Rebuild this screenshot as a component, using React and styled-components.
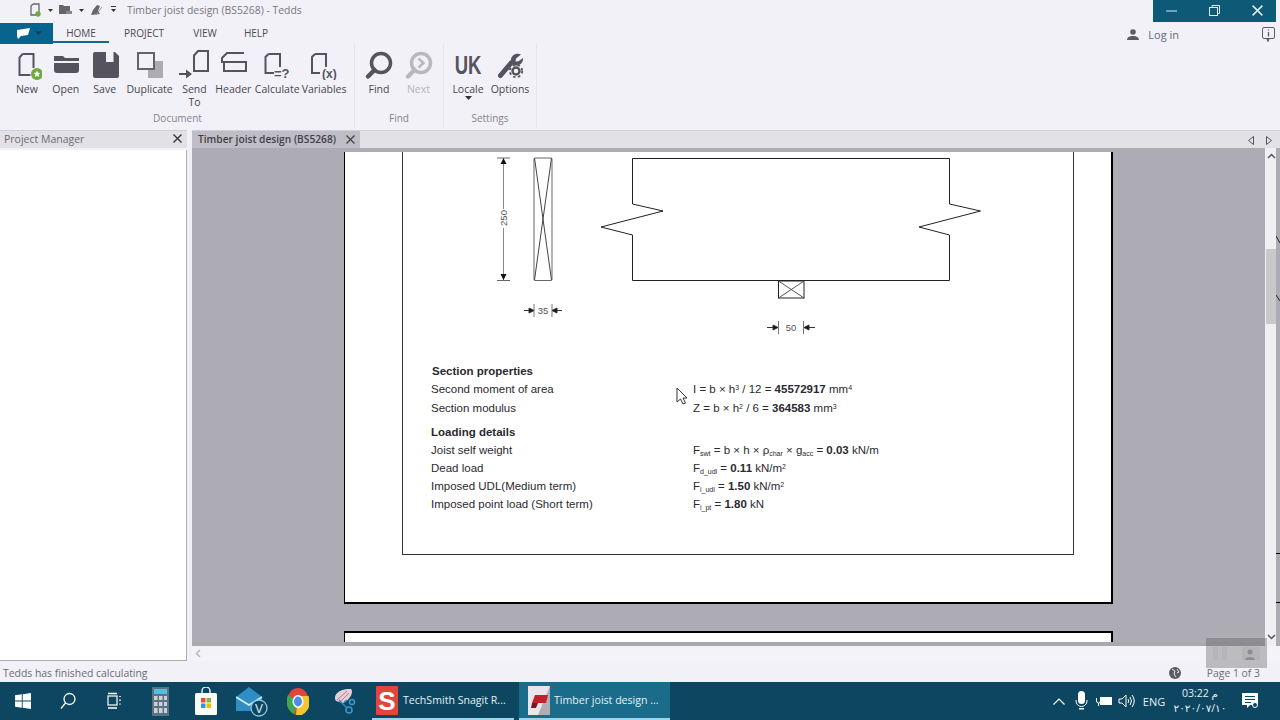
import React from 'react';
import styled, { createGlobalStyle } from 'styled-components';

const GlobalStyle = createGlobalStyle`
  html, body { margin: 0; padding: 0; width: 1280px; height: 720px; overflow: hidden; }
  body { font-family: "Open Sans", "Liberation Sans", sans-serif; background: #f2f1f8; }
`;

const ICON = '#55535e';
const BG = '#f2f1f8';

const Window = styled.div`
  width: 1280px;
  height: 720px;
  display: flex;
  flex-direction: column;
  background: ${BG};
  overflow: hidden;
`;

const TitleBar = styled.div`
  height: 22px;
  display: flex;
  align-items: flex-start;
  padding-left: 28px;
  flex: none;
`;

const QuickIcons = styled.div`
  display: flex;
  align-items: center;
  height: 20px;
  width: 99px;
`;

const TitleText = styled.div`
  font-size: 10.4px;
  line-height: 20px;
  color: #77767e;
`;

const WindowControls = styled.div`
  margin-left: auto;
  margin-right: 4px;
  width: 123px;
  height: 22px;
  background: #0c5a76;
  display: flex;
  align-items: center;
  justify-content: space-between;
  padding: 0 13px 1px 13px;
  box-sizing: border-box;
`;

const MenuRow = styled.div`
  height: 22px;
  display: flex;
  align-items: center;
  position: relative;
  flex: none;
`;

const FileButton = styled.div`
  width: 53px;
  height: 21px;
  background: #07648f;
  display: flex;
  align-items: center;
  gap: 5px;
  padding-left: 14px;
  box-sizing: border-box;
`;

const MenuTab = styled.div`
  width: ${p => p.$w}px;
  height: 20px;
  line-height: 20px;
  text-align: center;
  font-size: 10px;
  color: #4b4a52;
  box-sizing: border-box;
  border-bottom: ${p => (p.$active ? '2px solid #0f6a92' : 'none')};
`;

const LoginArea = styled.div`
  margin-left: auto;
  padding-top: 2px;
  display: flex;
  align-items: center;
  font-size: 11px;
  color: #5f6a74;
`;

const LoginText = styled.span`
  margin-left: 9px;
  margin-right: 101px;
`;

const InfoWrap = styled.div`
  position: absolute;
  right: 5px;
  top: 3px;
`;

const Ribbon = styled.div`
  height: 86px;
  display: flex;
  flex: none;
`;

const Group = styled.div`
  display: flex;
  flex-direction: column;
  padding: 6px ${p => p.$pr}px 0 ${p => p.$pl}px;
  border-right: 1px solid #e6e5ec;
  box-sizing: border-box;
  width: ${p => p.$w}px;
  height: 84px;
`;

const GroupButtons = styled.div`
  display: flex;
  height: 62px;
`;

const GroupLabel = styled.div`
  font-size: 10px;
  line-height: 12px;
  text-align: center;
  color: #85848c;
`;

const RibbonBtn = styled.div`
  width: ${p => p.$w}px;
  display: flex;
  flex-direction: column;
  align-items: center;
  font-size: 10.5px;
  line-height: 13px;
  color: ${p => (p.$off ? '#b5b4ba' : '#47464e')};
  text-align: center;
  svg { display: block; margin-bottom: 3px; flex: none; }
`;

const UkMark = styled.div`
  width: 40px;
  height: 30px;
  margin-bottom: 3px;
  text-align: center;
  font-family: "Liberation Sans", Arial, sans-serif;
  font-size: 25px;
  line-height: 30px;
  font-weight: 700;
  color: ${ICON};
  transform: scaleX(0.74);
`;

const Main = styled.div`
  height: 531px;
  display: flex;
  flex: none;
`;

const Sidebar = styled.div`
  width: 192px;
  display: flex;
  flex-direction: column;
`;

const PanelHeader = styled.div`
  width: 187px;
  height: 18px;
  background: #e1e1e6;
  border-top: 1px solid #d0d0d6;
  box-sizing: border-box;
  display: flex;
  align-items: center;
  justify-content: space-between;
  padding: 0 5px 2px 4px;
  font-size: 10.5px;
  color: #6c6b73;
`;

const PanelBody = styled.div`
  width: 187px;
  margin-top: 2px;
  flex: 1;
  background: #fff;
  border: 1px solid #aeadb4;
  border-top: none;
  border-left: none;
  box-sizing: border-box;
`;

const DocColumn = styled.div`
  flex: 1;
  display: flex;
  flex-direction: column;
  min-width: 0;
`;

const TabStrip = styled.div`
  height: 18px;
  background: #e1e1e6;
  border-top: 1px solid #d0d0d6;
  box-sizing: border-box;
  display: flex;
  align-items: flex-end;
  justify-content: space-between;
`;

const DocTab = styled.div`
  width: 168px;
  height: 17px;
  background: #bfbec7;
  display: flex;
  align-items: center;
  justify-content: space-between;
  padding: 0 5px 1px 6px;
  box-sizing: border-box;
  font-size: 10.2px;
  font-weight: 600;
  color: #3f3e46;
  white-space: nowrap;
`;

const TabArrows = styled.div`
  display: flex;
  gap: 12px;
  padding: 0 8px 3px 0;
  align-items: center;
`;

const ViewerRow = styled.div`
  height: 498px;
  display: flex;
  position: relative;
`;

const Viewer = styled.div`
  width: 1073px;
  height: 498px;
  background: #adabb3;
  border-bottom: 4px solid #a9a9ae;
  box-sizing: border-box;
  padding: 4px 0 0 152px;
  overflow: hidden;
`;

const Paper = styled.div`
  width: 769px;
  height: 452px;
  box-sizing: border-box;
  background: #fff;
  border: 2px solid #000;
  border-top: none;
  border-left-width: 1px;
  padding-left: 57px;
  padding-right: 37px;
`;

const NextPaper = styled.div`
  width: 769px;
  height: 40px;
  margin-top: 27px;
  box-sizing: border-box;
  background: #fff;
  border: 2px solid #000;
  border-left-width: 1px;
  border-bottom: none;
`;

const Frame = styled.div`
  height: 403px;
  box-sizing: border-box;
  border: 1px solid #333;
  border-top: none;
  padding-left: 28px;
  position: relative;
`;

const Diagram = styled.svg`
  display: block;
  margin-left: -28px;
`;

const CalcRow = styled.div`
  display: grid;
  grid-template-columns: 262px 1fr;
  height: ${p => p.$h}px;
  margin-top: ${p => p.$mt || 0}px;
  line-height: ${p => p.$h}px;
  font-family: "Liberation Sans", Arial, sans-serif;
  font-size: 11.5px;
  color: #2a2a2e;
  white-space: nowrap;
`;

const Sub = styled.span`
  font-size: 7px;
  position: relative;
  top: 2px;
`;

const Sup = styled.span`
  font-size: 7px;
  position: relative;
  top: -3px;
`;

const Heading = styled.b`
  padding-left: 1px;
`;

const Cursor = styled.svg`
  position: absolute;
  left: 273px;
  top: 235px;
`;

const ScrollTrack = styled.div`
  width: 10px;
  margin-left: 1px;
  background: #f0f0f4;
  display: flex;
  flex-direction: column;
  align-items: center;
  justify-content: space-between;
  padding: 5px 0 6px;
  box-sizing: border-box;
  position: relative;
`;

const ScrollThumb = styled.div`
  position: absolute;
  left: 0;
  right: 0;
  top: 101px;
  height: 75px;
  background: #c9c9cc;
`;

const EdgeSliver = styled.div`
  width: 4px;
  background: #adabb3;
`;

const HScroll = styled.div`
  flex: 1;
  display: flex;
  align-items: center;
  padding-left: 3px;
  background: #f4f3f8;
`;

const StatusBar = styled.div`
  height: 21px;
  flex: none;
  display: flex;
  align-items: center;
  padding: 3px 20px 0 3px;
  box-sizing: border-box;
  font-size: 10.4px;
  color: #6c6b73;
  justify-content: space-between;
`;

const StatusRight = styled.div`
  display: flex;
  align-items: center;
  gap: 26px;
`;

const RecorderBar = styled.div`
  position: absolute;
  left: 1014px;
  top: 490px;
  width: 61px;
  height: 30px;
  background: rgba(88, 88, 88, 0.36);
  display: flex;
  align-items: center;
  justify-content: space-around;
  box-sizing: border-box;
`;

const Taskbar = styled.div`
  height: 38px;
  flex: none;
  background: #0c4660;
  display: flex;
  align-items: stretch;
  color: #e8f0f4;
`;

const Slot = styled.div`
  width: ${p => p.$w || 46}px;
  display: flex;
  align-items: center;
  justify-content: center;
  flex: none;
`;

const TaskApp = styled.div`
  width: ${p => p.$w}px;
  margin-left: 5px;
  box-sizing: border-box;
  display: flex;
  align-items: center;
  gap: ${p => p.$gap}px;
  padding-left: ${p => p.$pl}px;
  font-size: 10.6px;
  white-space: nowrap;
  background: ${p => (p.$active ? '#1b6b8b' : 'transparent')};
  border-bottom: 2px solid #9fd3ea;
`;

const Tray = styled.div`
  margin-left: auto;
  display: flex;
  align-items: stretch;
  padding-right: 10px;
  font-size: 11px;
`;

const Clock = styled.div`
  width: 60px;
  flex: none;
  display: flex;
  flex-direction: column;
  align-items: center;
  justify-content: center;
  font-size: 10.5px;
  line-height: 15px;
  font-family: "Open Sans", "DejaVu Sans", sans-serif;
  direction: ltr;
`;

const Stroke = { fill: 'none', stroke: ICON, strokeWidth: 2 };

const NewIcon = () => (
  <svg width="30" height="30">
    <path d="M10.5 4h11v14M10.5 4L7.5 7.5V25h11" {...Stroke} />
    <circle cx="25" cy="24" r="6" fill="#6faa3e" />
    <path d="M25 20.5l1 2.3 2.4.2-1.8 1.6.6 2.4-2.2-1.3-2.2 1.3.6-2.4-1.8-1.6 2.4-.2z" fill="#fff" />
  </svg>
);

const OpenIcon = () => (
  <svg width="30" height="30">
    <path d="M3 6h9l2 2h14v3H3z" fill={ICON} />
    <path d="M3 13h25v7a3 3 0 0 1-3 3H6a3 3 0 0 1-3-3z" fill={ICON} />
  </svg>
);

const SaveIcon = () => (
  <svg width="30" height="30">
    <path d="M5 2h20l4 4v20a2 2 0 0 1-2 2H5a2 2 0 0 1-2-2V4a2 2 0 0 1 2-2z" fill={ICON} />
    <rect x="16" y="2" width="7.5" height="10" fill={BG} />
  </svg>
);

const DuplicateIcon = () => (
  <svg width="30" height="30">
    <rect x="13" y="11" width="15" height="17" fill="#adacb2" />
    <rect x="3" y="3" width="16" height="16" fill={BG} stroke="#64636b" strokeWidth="2" />
  </svg>
);

const SendToIcon = () => (
  <svg width="30" height="30">
    <path d="M19 1h10v20H15V5.5z" {...Stroke} />
    <path d="M0 23h7v-3.5l6 4.500-6 4.500V25H0z" fill={ICON} />
  </svg>
);

const HeaderIcon = () => (
  <svg width="30" height="30">
    <path d="M26 3H9L4 8v5" {...Stroke} />
    <rect x="6" y="12" width="22" height="9" {...Stroke} />
  </svg>
);

const CalculateIcon = () => (
  <svg width="30" height="30">
    <path d="M6.500 4H18v13M6.500 4L3.500 7v16H12" {...Stroke} />
    <text x="12" y="28" fontFamily="Liberation Sans" fontWeight="700" fontSize="13" fill={ICON}>=?</text>
  </svg>
);

const VariablesIcon = () => (
  <svg width="30" height="30">
    <path d="M6 4h11v13M6 4L3 7v16h8" {...Stroke} />
    <text x="13" y="28" fontFamily="Liberation Sans" fontWeight="700" fontSize="12" fill={ICON}>(x)</text>
  </svg>
);

const FindIcon = ({ off }) => {
  const c = off ? '#b9b8bd' : ICON;
  return (
    <svg width="30" height="30">
      <circle cx="17" cy="13" r="9.500" fill="none" stroke={c} strokeWidth="3.500" />
      <path d="M10.500 20L4 26.500" stroke={c} strokeWidth="4.500" strokeLinecap="round" />
      {off && <path d="M14.500 8.500l5 4.500-5 4.500" fill="none" stroke={c} strokeWidth="2.500" />}
    </svg>
  );
};

const OptionsIcon = () => (
  <svg width="30" height="30">
    <path d="M5.500 25.500L16 13" stroke={ICON} strokeWidth="5" strokeLinecap="round" />
    <path d="M26 4.500l-5 4 -.5 3 3-.2 4.500-3.300c.5 3-1.500 7-6 7.500-3 .2-6-2-6-5.500 0-4.500 5-7.500 10-5.500z" fill={ICON} />
    <circle cx="21" cy="21" r="3.500" fill={BG} stroke={ICON} strokeWidth="2.500" />
    <circle cx="21" cy="21" r="6.200" fill="none" stroke={ICON} strokeWidth="1.800" strokeDasharray="2.500 2.500" />
  </svg>
);

const Caret = ({ c = '#333' }) => (
  <svg width="7" height="4"><path d="M0 0h7L3.500 4z" fill={c} /></svg>
);

const CloseX = ({ c = '#333', s = 9 }) => (
  <svg width={s} height={s} viewBox="0 0 9 9"><path d="M.5.500l8 8M8.500.500l-8 8" stroke={c} strokeWidth="1.300" /></svg>
);

const Chevron = ({ d = 'M1 5l3.500-3.500L8 5' }) => (
  <svg width="9" height="6"><path d={d} fill="none" stroke="#55545c" strokeWidth="1.500" /></svg>
);

function Dim35() {
  return (
    <g stroke="#333" strokeWidth="1" fill="none">
      <path d="M524 310.500h10M562 310.500h-10" />
      <path d="M534 304v13M552 304v13" stroke="#777" />
      <path d="M529 308l5 2.500-5 2.500zM557 308l-5 2.500 5 2.500z" fill="#111" />
    </g>
  );
}

function Dim50() {
  return (
    <g stroke="#333" strokeWidth="1" fill="none">
      <path d="M767 327.500h11M815 327.500h-11" />
      <path d="M778.500 321v13M803.500 321v13" stroke="#777" />
      <path d="M773 325l5 2.500-5 2.500zM809 325l-5 2.500 5 2.500z" fill="#111" />
    </g>
  );
}

const Sketch = () => (
  <Diagram width="670" height="210" viewBox="403 152 670 210">
    <g fill="none" stroke="#222" strokeWidth="1">
      <path d="M497 158h13M497 280.500h13" stroke="#666" />
      <path d="M503.500 158v122" stroke="#888" />
      <rect x="534" y="158" width="18" height="122.500" rx="1" stroke="#666" />
      <path d="M534.500 158L551.500 280M551.500 158L534.500 280" stroke="#444" />
      <path d="M632.500 204V158.500H949.500V204L980.500 211L919 227L949.500 235V280.500H632.500V235L601 227L663 211z" />
      <rect x="778.500" y="281" width="25.500" height="17" />
      <path d="M778.500 281L804 298M804 281L778.500 298" stroke="#555" />
    </g>
    <path d="M503.500 158l-3 6h6zM503.500 280l-3-6h6z" fill="#111" />
    <rect x="498" y="209" width="11" height="19" fill="#fff" />
    <text x="503" y="221.500" transform="rotate(-90 503 218)" textAnchor="middle" fontFamily="Liberation Sans" fontSize="9.500" fill="#555">250</text>
    <Dim35 />
    <text x="543" y="313.500" textAnchor="middle" fontFamily="Liberation Sans" fontSize="9.500" fill="#555">35</text>
    <Dim50 />
    <text x="791" y="330.500" textAnchor="middle" fontFamily="Liberation Sans" fontSize="9.500" fill="#555">50</text>
  </Diagram>
);

const rows = [
  { h: 19, label: <Heading>Section properties</Heading> },
  { h: 17, label: 'Second moment of area', value: <>I = b × h<Sup>3</Sup> / 12 = <b>45572917</b> mm<Sup>4</Sup></> },
  { h: 21, label: 'Section modulus', value: <>Z = b × h<Sup>2</Sup> / 6 = <b>364583</b> mm<Sup>3</Sup></> },
  { h: 20, mt: 3, label: <b>Loading details</b> },
  { h: 16, label: 'Joist self weight', value: <>F<Sub>swt</Sub> = b × h × ρ<Sub>char</Sub> × g<Sub>acc</Sub> = <b>0.03</b> kN/m</> },
  { h: 21, label: 'Dead load', value: <>F<Sub>d_udl</Sub> = <b>0.11</b> kN/m<Sup>2</Sup></> },
  { h: 14, label: 'Imposed UDL(Medium term)', value: <>F<Sub>i_udl</Sub> = <b>1.50</b> kN/m<Sup>2</Sup></> },
  { h: 22, label: 'Imposed point load (Short term)', value: <>F<Sub>i_pt</Sub> = <b>1.80</b> kN</> },
];

const ribbonButtons = [
  { w: 38, label: 'New', icon: <NewIcon /> },
  { w: 40, label: 'Open', icon: <OpenIcon /> },
  { w: 38, label: 'Save', icon: <SaveIcon /> },
  { w: 52, label: 'Duplicate', icon: <DuplicateIcon /> },
  { w: 38, label: <>Send<br />To</>, icon: <SendToIcon /> },
  { w: 40, label: 'Header', icon: <HeaderIcon /> },
  { w: 48, label: 'Calculate', icon: <CalculateIcon /> },
  { w: 46, label: 'Variables', icon: <VariablesIcon /> },
];

const WinLogo = () => (
  <svg width="16" height="16" viewBox="0 0 16 16" fill="#fff">
    <path d="M0 2.300l6.800-1v6.300H0zM7.700 1.200L16 0v7.600H7.700zM0 8.400h6.800v6.300L0 13.700zM7.700 8.400H16V16l-8.300-1.200z" />
  </svg>
);

const SearchGlyph = () => (
  <svg width="16" height="18" fill="none" stroke="#fff" strokeWidth="1.300">
    <circle cx="9.500" cy="7" r="5.500" />
    <path d="M5.500 11L1 16.500" />
  </svg>
);

const TaskViewGlyph = () => (
  <svg width="15" height="18" fill="none" stroke="#fff" strokeWidth="1.200">
    <rect x="1" y="4" width="9" height="9" />
    <path d="M1 1.500h9M1 16h9M13 4v1M13 7.500v1.500M13 11.500v1" strokeWidth="1.500" />
  </svg>
);

const CalcGlyph = () => (
  <svg width="17" height="29" viewBox="0 0 17 29">
    <rect width="17" height="29" fill="#5c7282" />
    <rect x="2" y="2" width="13" height="5" fill="#50c0de" />
    <path d="M2 9h3.500v4H2zM7 9h3.500v4H7zM12 9h3v4h-3zM2 15h3.500v4H2zM7 15h3.500v4H7zM12 15h3v4h-3zM2 21h3.500v5H2zM7 21h3.500v5H7zM12 21h3v5h-3z" fill="#c8d2d8" />
  </svg>
);

const StoreGlyph = () => (
  <svg width="22" height="28" viewBox="0 0 22 28">
    <path d="M7 6V4a4 4 0 0 1 8 0v2" fill="none" stroke="#e8eef0" strokeWidth="1.500" />
    <rect y="6" width="22" height="22" rx="1.500" fill="#fbfbfb" />
    <rect x="6" y="11" width="4.500" height="4.500" fill="#e8502a" />
    <rect x="11.500" y="11" width="4.500" height="4.500" fill="#7db93a" />
    <rect x="6" y="16.500" width="4.500" height="4.500" fill="#1ea0e0" />
    <rect x="11.500" y="16.500" width="4.500" height="4.500" fill="#f7b900" />
  </svg>
);

const MailGlyph = () => (
  <svg width="32" height="32" viewBox="0 0 32 32">
    <path d="M0 12L13 2l13 10v14H0z" fill="#2f8fc4" />
    <path d="M0 12l13 8 13-8" fill="none" stroke="#d8eef8" strokeWidth="1.500" />
    <circle cx="23" cy="23" r="8" fill="#0c4660" stroke="#8fc8e4" strokeWidth="1.300" />
    <text x="23" y="27.500" textAnchor="middle" fontFamily="Liberation Sans" fontSize="12" fill="#dcecf4">V</text>
  </svg>
);

const ChromeGlyph = () => (
  <svg width="22" height="27" viewBox="0 0 22 27">
    <ellipse cx="11" cy="13.500" rx="11" ry="13.500" fill="#e0463a" />
    <path d="M11 13.500L1 7A11 13.500 0 0 0 7 26z" fill="#3da84e" />
    <path d="M11 8h10.500A11 13.500 0 0 1 9 27z" fill="#f6c52e" />
    <ellipse cx="11" cy="13.500" rx="5.500" ry="6.500" fill="#fff" />
    <ellipse cx="11" cy="13.500" rx="4" ry="5" fill="#4a8ee8" />
  </svg>
);

const SnipGlyph = () => (
  <svg width="24" height="26" viewBox="0 0 24 26">
    <path d="M4 13C0 7 8 0 19 1c3 3-1 11-8 14z" fill="#e6cfd6" />
    <path d="M5 12L15 3M9 13L17 5" stroke="#b08090" />
    <path d="M7 12l8 8" stroke="#2f8fc4" strokeWidth="1.500" />
    <path d="M12 14l3-2" stroke="#2f8fc4" strokeWidth="1.500" />
    <circle cx="17" cy="22" r="3" fill="none" stroke="#3a9ad0" strokeWidth="1.500" />
    <circle cx="20" cy="14" r="2.500" fill="none" stroke="#3a9ad0" strokeWidth="1.500" />
  </svg>
);

const SnagitGlyph = () => (
  <svg width="22" height="29" viewBox="0 0 22 29">
    <rect width="22" height="29" rx="1" fill="#e2453c" />
    <text x="11" y="24" textAnchor="middle" fontFamily="Liberation Sans" fontWeight="700" fontSize="26" fill="#fff">S</text>
  </svg>
);

const TeddsGlyph = () => (
  <svg width="22" height="29" viewBox="0 0 22 29">
    <rect width="22" height="29" fill="#e8e6ea" />
    <path d="M22 0v29H10z" fill="#b0aeb4" />
    <path d="M7 9h13l-2 8H4z" fill="#c4202c" />
    <path d="M4 17h6l-2 5H3z" fill="#7a1820" />
  </svg>
);

const MicGlyph = () => (
  <svg width="13" height="20" fill="#fff">
    <rect x="3" y="0" width="7" height="13" rx="3.500" />
    <path d="M1 9v1a5.500 5.500 0 0 0 11 0V9" fill="none" stroke="#fff" />
    <path d="M4 17h5v1.500H4z" />
  </svg>
);

const BatteryGlyph = () => (
  <svg width="16" height="12" fill="none" stroke="#fff">
    <rect x="4.500" y="2.500" width="11" height="7" fill="#fff" />
    <path d="M.5 3v3a2 2 0 0 0 4 0V3M2.500 8v3" />
  </svg>
);

const VolumeGlyph = () => (
  <svg width="18" height="14" fill="none" stroke="#fff">
    <path d="M1 5h3l4-4v12L4 9H1z" />
    <path d="M10 5q1.500 2 0 4M12 3q3 4 0 8M14 1q4.500 6 0 12" />
  </svg>
);

const NotifyGlyph = () => (
  <svg width="17" height="16" viewBox="0 0 17 16">
    <path d="M0 0h16v12H8l-3 3v-3H0z" fill="#fff" />
    <path d="M3 3.500h10M3 6.500h10M3 9.500h6" stroke="#0c4660" />
    <circle cx="13" cy="12" r="2.500" fill="#0c4660" stroke="#fff" />
  </svg>
);

export default function App() {
  return (
    <Window>
      <GlobalStyle />
      <TitleBar>
        <QuickIcons>
          <svg width="90" height="14" viewBox="0 0 90 14">
            <path d="M5 1h6v8M5 1L3 3v9h5" fill="none" stroke="#666" strokeWidth="1.300" />
            <circle cx="10" cy="11" r="2.700" fill="#6faa3e" />
            <path d="M20 6h5L22.500 9z" fill="#333" />
            <path d="M31 2h4l1 1h6v8H31z" fill="#666" />
            <path d="M38 8h6v3h-6z" fill="#888" />
            <path d="M51 6h5l-2.500 3z" fill="#333" />
            <path d="M63 12l2-5 4-5 3 1-2 5 2 3z" fill="#666" />
            <path d="M68 12l6-8" stroke="#999" />
            <path d="M83 3h5v1h-5zM83 6h5l-2.500 3z" fill="#333" />
          </svg>
        </QuickIcons>
        <TitleText>Timber joist design (BS5268) - Tedds</TitleText>
        <WindowControls>
          <svg width="11" height="2"><path d="M0 1h11" stroke="#dfe9ee" /></svg>
          <svg width="11" height="11" fill="none" stroke="#dfe9ee"><path d="M3 2.500V.5h7.500v8H8.500" /><rect x=".5" y="2.500" width="8" height="8" /></svg>
          <CloseX c="#dfe9ee" s={11} />
        </WindowControls>
      </TitleBar>

      <MenuRow>
        <FileButton>
          <svg width="16" height="11"><path d="M3 2L16 0l-2 7-7 1-3 3-1-3z" fill="#fff" /></svg>
          <Caret c="#0a3e5a" />
        </FileButton>
        <MenuTab $w={56} $active>HOME</MenuTab>
        <MenuTab $w={70}>PROJECT</MenuTab>
        <MenuTab $w={52}>VIEW</MenuTab>
        <MenuTab $w={50}>HELP</MenuTab>
        <LoginArea>
          <svg width="12" height="11" fill="#5c5b64"><circle cx="6" cy="3" r="2.800" /><path d="M0 11c0-3 3-3.500 4-4h4c1 .5 4 1 4 4z" /></svg>
          <LoginText>Log in</LoginText>
        </LoginArea>
        <InfoWrap>
          <svg width="13" height="15" fill="none" stroke="#5c5b64">
            <rect x=".5" y=".5" width="12" height="11" rx="1.500" />
            <path d="M6.500 2.500v1M6.500 5v4.500M5 12l1 2 1-2" strokeWidth="1.300" />
          </svg>
        </InfoWrap>
      </MenuRow>

      <Ribbon>
        <Group $w={355} $pl={8} $pr={7}>
          <GroupButtons>
            {ribbonButtons.map((b, i) => (
              <RibbonBtn key={i} $w={b.w}>{b.icon}<span>{b.label}</span></RibbonBtn>
            ))}
          </GroupButtons>
          <GroupLabel>Document</GroupLabel>
        </Group>
        <Group $w={89} $pl={4} $pr={4}>
          <GroupButtons>
            <RibbonBtn $w={40}><FindIcon /><span>Find</span></RibbonBtn>
            <RibbonBtn $w={39} $off><FindIcon off /><span>Next</span></RibbonBtn>
          </GroupButtons>
          <GroupLabel>Find</GroupLabel>
        </Group>
        <Group $w={93} $pl={4} $pr={4}>
          <GroupButtons>
            <RibbonBtn $w={40}><UkMark>UK</UkMark><span>Locale</span><Caret /></RibbonBtn>
            <RibbonBtn $w={44}><OptionsIcon /><span>Options</span></RibbonBtn>
          </GroupButtons>
          <GroupLabel>Settings</GroupLabel>
        </Group>
      </Ribbon>

      <Main>
        <Sidebar>
          <PanelHeader>Project Manager <CloseX /></PanelHeader>
          <PanelBody />
        </Sidebar>
        <DocColumn>
          <TabStrip>
            <DocTab>Timber joist design (BS5268) <CloseX c="#444" /></DocTab>
            <TabArrows>
              <svg width="6" height="9"><path d="M5.500.5v8L.5 4.500z" fill="none" stroke="#55545c" /></svg>
              <svg width="6" height="9"><path d="M.5.5v8l5-4z" fill="none" stroke="#55545c" /></svg>
            </TabArrows>
          </TabStrip>
          <ViewerRow>
            <Viewer>
              <Paper>
                <Frame>
                  <Sketch />
                  {rows.map((r, i) => (
                    <CalcRow key={i} $h={r.h} $mt={r.mt}>
                      <div>{r.label}</div>
                      <div>{r.value}</div>
                    </CalcRow>
                  ))}
                  <Cursor width="13" height="18" viewBox="0 0 13 18">
                    <path d="M1 1v14l3.500-3 2.500 5 2.500-1-2.500-5H11z" fill="#fff" stroke="#333" />
                  </Cursor>
                </Frame>
              </Paper>
              <NextPaper />
            </Viewer>
            <ScrollTrack>
              <Chevron />
              <ScrollThumb />
              <Chevron d="M1 1l3.500 3.500L8 1" />
            </ScrollTrack>
            <EdgeSliver>
              <svg width="4" height="498">
                <path d="M0 88l4 7M0 147l4 6" stroke="#222" />
                <path d="M0 405.500h4M0 454.500h4" stroke="#000" />
              </svg>
            </EdgeSliver>
            <RecorderBar>
              <svg width="14" height="13" fill="#b5b4b8"><rect x="0" width="5" height="13" /><rect x="9" width="5" height="13" /></svg>
              <svg width="18" height="13" fill="#b5b4b8"><rect width="18" height="13" /><circle cx="8" cy="5" r="2.500" fill="#8e8d92" /><path d="M3 13c0-4 10-4 10 0z" fill="#8e8d92" /></svg>
            </RecorderBar>
          </ViewerRow>
          <HScroll>
            <svg width="6" height="9"><path d="M5 1L1.500 4.500 5 8" fill="none" stroke="#b8b7bd" strokeWidth="1.500" /></svg>
          </HScroll>
        </DocColumn>
      </Main>

      <StatusBar>
        <span>Tedds has finished calculating</span>
        <StatusRight>
          <svg width="12" height="12"><circle cx="6" cy="6" r="6" fill="#5c5b64" /><path d="M3 2l3 2-1 3 2 3M8 2l2 3-2 1" stroke="#e8e8ec" fill="none" /></svg>
          <span>Page 1 of 3</span>
        </StatusRight>
      </StatusBar>

      <Taskbar>
        <Slot $w={45}><WinLogo /></Slot>
        <Slot><SearchGlyph /></Slot>
        <Slot><TaskViewGlyph /></Slot>
        <Slot><CalcGlyph /></Slot>
        <Slot><StoreGlyph /></Slot>
        <Slot><MailGlyph /></Slot>
        <Slot><ChromeGlyph /></Slot>
        <Slot><SnipGlyph /></Slot>
        <TaskApp $w={142} $pl={4} $gap={5}><SnagitGlyph />TechSmith Snagit R...</TaskApp>
        <TaskApp $w={151} $pl={9} $gap={4} $active><TeddsGlyph />Timber joist design ...</TaskApp>
        <Tray>
          <Slot $w={22}><svg width="12" height="7" fill="none" stroke="#fff" strokeWidth="1.200"><path d="M.5 6.500l5.500-5.500 5.500 5.500" /></svg></Slot>
          <Slot $w={22}><MicGlyph /></Slot>
          <Slot $w={24}><BatteryGlyph /></Slot>
          <Slot $w={22}><VolumeGlyph /></Slot>
          <Slot $w={32}>ENG</Slot>
          <Clock>
            <span>03:22 م</span>
            <span dir="ltr">٢٠٢٠/٠٧/١٠</span>
          </Clock>
          <Slot $w={40}><NotifyGlyph /></Slot>
        </Tray>
      </Taskbar>
    </Window>
  );
}
